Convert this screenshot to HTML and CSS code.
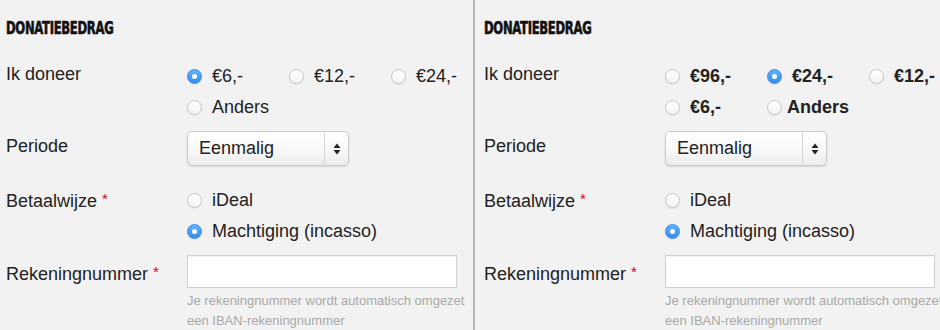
FILE: index.html
```html
<!DOCTYPE html>
<html lang="nl">
<head>
    <meta charset="UTF-8">
    <meta name="viewport" content="width=device-width, initial-scale=1.0">
    <title>Donatiebedrag</title>
    <link rel="stylesheet" href="styles.css">
</head>
<body>
    <div class="screens">
        <section class="panel panel-left">
            <h2 class="heading">Donatiebedrag</h2>

            <div class="field">
                <div class="field-label">Ik doneer</div>
                <div class="options">
                    <label class="option"><span class="radio checked"></span>€6,-</label>
                    <label class="option"><span class="radio"></span>€12,-</label>
                    <label class="option"><span class="radio"></span>€24,-</label>
                    <label class="option"><span class="radio"></span>Anders</label>
                </div>
            </div>

            <div class="field field-select">
                <div class="field-label">Periode</div>
                <div class="select">
                    <span class="select-value">Eenmalig</span>
                    <span class="select-arrows">
                        <svg width="8" height="12" viewBox="0 0 8 12"><path d="M4 0.5 L7.5 5 H0.5 Z M4 11.5 L7.5 7 H0.5 Z" fill="#222"/></svg>
                    </span>
                </div>
            </div>

            <div class="field">
                <div class="field-label">Betaalwijze <span class="required">*</span></div>
                <div class="options options-stacked">
                    <label class="option"><span class="radio"></span>iDeal</label>
                    <label class="option"><span class="radio checked"></span>Machtiging (incasso)</label>
                </div>
            </div>

            <div class="field field-input">
                <div class="field-label">Rekeningnummer <span class="required">*</span></div>
                <div class="input-wrap">
                    <div class="text-input"></div>
                    <p class="help">Je rekeningnummer wordt automatisch omgezet<br>een IBAN-rekeningnummer</p>
                </div>
            </div>
        </section>

        <div class="divider"></div>

        <section class="panel panel-right">
            <h2 class="heading">Donatiebedrag</h2>

            <div class="field">
                <div class="field-label">Ik doneer</div>
                <div class="options options-bold">
                    <label class="option"><span class="radio"></span>€96,-</label>
                    <label class="option"><span class="radio checked"></span>€24,-</label>
                    <label class="option"><span class="radio"></span>€12,-</label>
                    <label class="option"><span class="radio"></span>€6,-</label>
                    <label class="option option-tight"><span class="radio"></span>Anders</label>
                </div>
            </div>

            <div class="field field-select">
                <div class="field-label">Periode</div>
                <div class="select">
                    <span class="select-value">Eenmalig</span>
                    <span class="select-arrows">
                        <svg width="8" height="12" viewBox="0 0 8 12"><path d="M4 0.5 L7.5 5 H0.5 Z M4 11.5 L7.5 7 H0.5 Z" fill="#222"/></svg>
                    </span>
                </div>
            </div>

            <div class="field">
                <div class="field-label">Betaalwijze <span class="required">*</span></div>
                <div class="options options-stacked">
                    <label class="option"><span class="radio"></span>iDeal</label>
                    <label class="option"><span class="radio checked"></span>Machtiging (incasso)</label>
                </div>
            </div>

            <div class="field field-input">
                <div class="field-label">Rekeningnummer <span class="required">*</span></div>
                <div class="input-wrap">
                    <div class="text-input"></div>
                    <p class="help">Je rekeningnummer wordt automatisch omgezet<br>een IBAN-rekeningnummer</p>
                </div>
            </div>
        </section>
    </div>
</body>
</html>
```

FILE: styles.css
```css
body {
    margin: 0;
    background-color: #f2f2f2;
    font-family: 'Liberation Sans', Arial, sans-serif;
    color: #222222;
}

.screens {
    display: flex;
    height: 330px;
    overflow: hidden;
}

.panel {
    box-sizing: border-box;
    overflow: hidden;
    padding-top: 19px;
}

.panel-left {
    width: 473px;
    padding-left: 6px;
}

.panel-right {
    flex: 1;
    padding-left: 9px;
}

.divider {
    width: 2px;
    background-color: #b4b4b4;
}

/* Titel in smalle, zware letters */
.heading {
    display: inline-block;
    margin: 0;
    font-family: 'DejaVu Sans Condensed', 'DejaVu Sans', sans-serif;
    font-weight: bold;
    font-size: 17px;
    line-height: 19px;
    text-transform: uppercase;
    letter-spacing: -0.4px;
    color: #111111;
    -webkit-text-stroke: 0.6px #111111;
    transform: scaleX(0.76);
    transform-origin: left center;
}

.field {
    display: flex;
    font-size: 18px;
}

.field:nth-of-type(1) {
    margin-top: 23px;
}

.field-label {
    width: 181px;
    flex-shrink: 0;
    line-height: 31px;
    margin-top: -2px;
}

.required {
    color: #d0021b;
    font-size: 15px;
    vertical-align: 3px;
}

.options {
    display: grid;
    grid-template-columns: repeat(3, 102px);
}

.options-bold {
    font-weight: bold;
}

.options-stacked {
    grid-template-columns: auto;
}

.option {
    display: flex;
    align-items: center;
    gap: 10px;
    height: 31px;
    white-space: nowrap;
}

.option-tight {
    gap: 5px;
}

/* Mac-achtige radioknoppen */
.radio {
    box-sizing: border-box;
    width: 15px;
    height: 15px;
    border-radius: 50%;
    border: 1px solid #c6c6c6;
    background: linear-gradient(#ffffff, #f3f3f3);
    box-shadow: 0 1px 1px rgba(0, 0, 0, 0.06);
    position: relative;
    flex-shrink: 0;
}

.radio.checked {
    border-color: #3a8ee6;
    background: linear-gradient(#67b0fb, #2f8cf3);
}

.radio.checked::after {
    content: '';
    position: absolute;
    left: 4px;
    top: 4px;
    width: 5px;
    height: 5px;
    border-radius: 50%;
    background-color: #ffffff;
}

.field-select {
    margin-top: 8px;
}

.field-select .field-label {
    line-height: 35px;
}

.select {
    box-sizing: border-box;
    display: flex;
    align-items: center;
    width: 162px;
    height: 35px;
    border: 1px solid #cbcbcb;
    border-radius: 5px;
    background: linear-gradient(#ffffff, #f7f7f7 60%, #ebebeb);
    box-shadow: 0 1px 2px rgba(0, 0, 0, 0.12);
}

.select-value {
    flex: 1;
    padding-left: 11px;
}

.select-arrows {
    display: flex;
    align-items: center;
    justify-content: center;
    width: 23px;
    height: 100%;
    border-left: 1px solid #d6d6d6;
}

.field-select + .field {
    margin-top: 19px;
}

.field-input {
    margin-top: 8px;
}

.field-input .field-label {
    line-height: 33px;
    margin-top: 0;
}

.text-input {
    box-sizing: border-box;
    width: 270px;
    height: 33px;
    background-color: #ffffff;
    border: 1px solid #d0d0d0;
    box-shadow: inset 0 1px 1px rgba(0, 0, 0, 0.05);
}

.help {
    margin: 3px 0 0;
    font-size: 13px;
    line-height: 20px;
    color: #a9a9a9;
    white-space: nowrap;
}
```
